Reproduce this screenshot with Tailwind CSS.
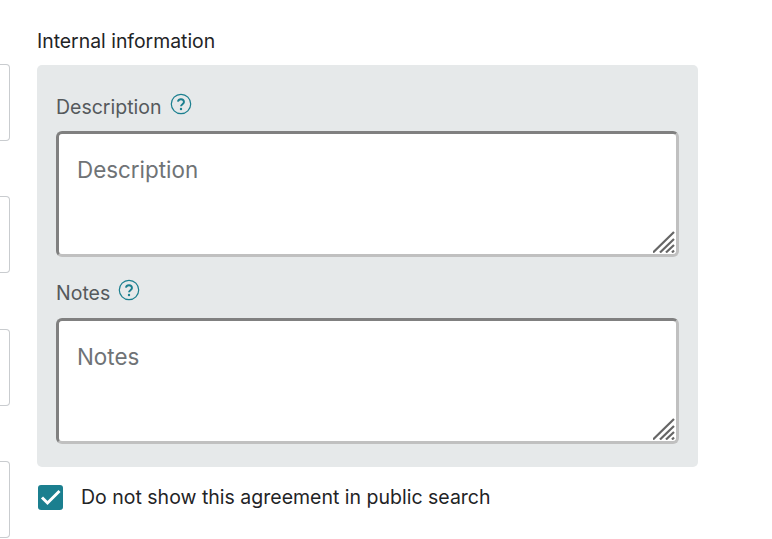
<!DOCTYPE html>
<html lang="en">
<head>
    <meta charset="UTF-8">
    <meta name="viewport" content="width=device-width, initial-scale=1.0">
    <title>Internal information</title>
    <script src="https://cdn.jsdelivr.net/npm/@tailwindcss/browser@4"></script>
</head>
<body class="bg-white h-[539px] overflow-hidden font-['Inter',sans-serif]">
    <div class="flex items-start">
        <!-- cut off inputs of the column on the left -->
        <div class="w-[10px] shrink-0 pt-[64px] flex flex-col">
            <div class="h-[77px] border border-l-0 border-[#c9cccf] rounded-r-[4px]"></div>
            <div class="h-[77px] mt-[55px] border border-l-0 border-[#c9cccf] rounded-r-[4px]"></div>
            <div class="h-[77px] mt-[56px] border border-l-0 border-[#c9cccf] rounded-r-[4px]"></div>
            <div class="h-[77px] mt-[55px] border border-l-0 border-[#c9cccf] rounded-r-[4px]"></div>
        </div>

        <div class="ml-[27px] w-[661px]">
            <h2 class="mt-[30px] h-[22px] leading-[22px] text-[19.4px] text-[#1f2426]">Internal information</h2>
            <div class="mt-[13px] h-[402px] bg-[#e6e9ea] rounded-[5px] px-[19px] pt-[29px]">
                <div class="flex items-start h-[37px]">
                    <label class="text-[19.5px] leading-[26px] text-[#55595c]">Description</label>
                    <svg class="ml-[8px] -mt-[1px]" width="22" height="22" viewBox="0 0 22 22" fill="none">
                        <circle cx="11" cy="11" r="9.7" stroke="#1b7f8f" stroke-width="1.2"/>
                        <path d="M7.9 8.6a3.1 3.1 0 0 1 6.1.4c0 2-3 2.3-3 4.2" stroke="#1b7f8f" stroke-width="1.9" fill="none"/>
                        <circle cx="11" cy="16" r="1.2" fill="#1b7f8f"/>
                    </svg>
                </div>
                <div class="relative h-[126px] bg-white rounded-[6px] border-[3px] border-t-[#808080] border-l-[#808080] border-r-[#c0c0c0] border-b-[#c0c0c0] px-[18px] pt-[21px]">
                    <p class="text-[22.4px] leading-[30px] text-[#6f7376]">Description</p>
                    <svg class="absolute right-[1px] bottom-[1px]" width="22" height="22" viewBox="0 0 22 22" stroke="#666" stroke-width="2.2">
                        <path d="M0 21.5 21 1M7 21.5 21 8M13 21.5 21 14M19 21.5 21 19.5"/>
                    </svg>
                </div>
                <div class="flex items-start h-[61px] pt-[23px]">
                    <label class="text-[19.5px] leading-[26px] text-[#55595c]">Notes</label>
                    <svg class="ml-[8px] -mt-[1px]" width="22" height="22" viewBox="0 0 22 22" fill="none">
                        <circle cx="11" cy="11" r="9.7" stroke="#1b7f8f" stroke-width="1.2"/>
                        <path d="M7.9 8.6a3.1 3.1 0 0 1 6.1.4c0 2-3 2.3-3 4.2" stroke="#1b7f8f" stroke-width="1.9" fill="none"/>
                        <circle cx="11" cy="16" r="1.2" fill="#1b7f8f"/>
                    </svg>
                </div>
                <div class="relative h-[126px] bg-white rounded-[6px] border-[3px] border-t-[#808080] border-l-[#808080] border-r-[#c0c0c0] border-b-[#c0c0c0] px-[18px] pt-[21px]">
                    <p class="text-[22.4px] leading-[30px] text-[#6f7376]">Notes</p>
                    <svg class="absolute right-[1px] bottom-[1px]" width="22" height="22" viewBox="0 0 22 22" stroke="#666" stroke-width="2.2">
                        <path d="M0 21.5 21 1M7 21.5 21 8M13 21.5 21 14M19 21.5 21 19.5"/>
                    </svg>
                </div>
            </div>
            <div class="mt-[17px] flex items-center ml-[1px]">
                <span class="w-[25px] h-[25px] bg-[#1b7f8f] rounded-[3px] flex items-center justify-center">
                    <svg width="25" height="25" viewBox="0 0 25 25" fill="none" stroke="#fff" stroke-width="3">
                        <path d="M4 12.5 9.5 18 21.5 6"/>
                    </svg>
                </span>
                <span class="ml-[18px] text-[19.5px] leading-[26px] text-[#1f2426]">Do not show this agreement in public search</span>
            </div>
        </div>
    </div>
</body>
</html>
